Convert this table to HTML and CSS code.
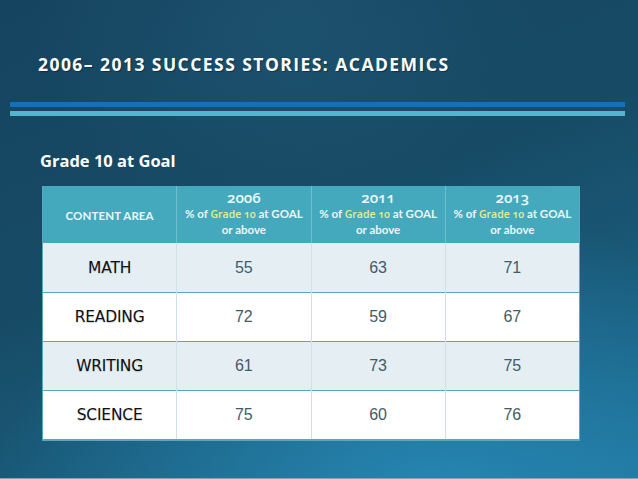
FILE: index.html
```html
<!DOCTYPE html>
<html>
<head>
<meta charset="utf-8">
<link rel="stylesheet" href="styles.css">
</head>
<body>
<div class="slide">
  <h1 class="title">2006– 2013 SUCCESS STORIES: ACADEMICS</h1>
  <div class="bars">
    <div class="bar bar-dark"></div>
    <div class="bar bar-light"></div>
  </div>
  <h2 class="subtitle">Grade 10 at Goal</h2>
  <table class="data">
    <thead>
      <tr>
        <th class="area">CONTENT AREA</th>
        <th><span class="year">2006</span><span class="desc">% of <em>Grade 10</em> at GOAL<br>or above</span></th>
        <th><span class="year">2011</span><span class="desc">% of <em>Grade 10</em> at GOAL<br>or above</span></th>
        <th><span class="year">2013</span><span class="desc">% of <em>Grade 10</em> at GOAL<br>or above</span></th>
      </tr>
    </thead>
    <tbody>
      <tr class="alt"><td class="label">MATH</td><td>55</td><td>63</td><td>71</td></tr>
      <tr><td class="label">READING</td><td>72</td><td>59</td><td>67</td></tr>
      <tr class="alt"><td class="label">WRITING</td><td>61</td><td>73</td><td>75</td></tr>
      <tr><td class="label">SCIENCE</td><td>75</td><td>60</td><td>76</td></tr>
    </tbody>
  </table>
</div>
</body>
</html>
```

FILE: styles.css
```css
html, body {
  margin: 0;
  padding: 0;
}
body {
  width: 638px;
  height: 479px;
  overflow: hidden;
}
.slide {
  width: 638px;
  height: 479px;
  box-sizing: border-box;
  padding-top: 53px;
  background:
    radial-gradient(ellipse 70% 60% at 68% 105%, rgba(40,140,185,0.85), rgba(40,140,185,0) 100%),
    radial-gradient(ellipse 40% 40% at 45% 5%, rgba(40,100,130,0.35), rgba(40,100,130,0) 100%),
    linear-gradient(160deg, #154460 0%, #174b65 45%, #1a5f80 80%, #1d7098 100%);
  border-bottom: 1px solid #5fb2cc;
  font-family: "Lato", "Open Sans", sans-serif;
}
.title {
  margin: 0 0 0 38px;
  font-family: "Open Sans", sans-serif;
  font-weight: 700;
  font-size: 17.5px;
  line-height: 22px;
  letter-spacing: 1.45px;
  color: #ffffff;
  text-shadow: 1px 1px 1px rgba(0,0,0,0.35);
}
.bars {
  margin: 27px 13px 0 10px;
  display: flex;
  flex-direction: column;
  gap: 4px;
}
.bar {
  height: 5px;
}
.bar-dark {
  background: #1370bd;
}
.bar-light {
  background: #52b6cf;
}
.subtitle {
  margin: 34px 0 0 40px;
  font-family: "Open Sans", sans-serif;
  font-weight: 700;
  font-size: 16.5px;
  line-height: 22px;
  color: #ffffff;
}
.data {
  margin: 14px 0 0 42px;
  width: 538px;
  border-collapse: collapse;
  table-layout: fixed;
  border-left: 1px solid #5aa9bb;
  border-right: 1px solid #5aa9bb;
}
.data th {
  background: #45a9bd;
  color: #eaf6f8;
  height: 55px;
  padding: 0;
  font-family: "Lato", sans-serif;
  font-weight: 400;
  vertical-align: middle;
  border-left: 1px solid #6fbecd;
}
.data th:first-child {
  border-left: none;
}
.data th.area {
  font-size: 11.5px;
  font-weight: 700;
  letter-spacing: 0.1px;
  padding-top: 2px;
}
.year {
  display: block;
  font-family: "Open Sans", sans-serif;
  font-variant-numeric: oldstyle-nums;
  font-feature-settings: "onum" 1;
  font-size: 15px;
  font-weight: 600;
  line-height: 17px;
  margin-top: -3px;
}
.desc {
  display: block;
  font-size: 11.5px;
  line-height: 15px;
  font-weight: 700;
}
.desc em {
  font-style: normal;
  color: #e3ef8e;
  font-family: "Open Sans", sans-serif;
  font-size: 10.5px;
  font-weight: 600;
  font-feature-settings: "onum" 1;
}
.data td {
  height: 48px;
  padding: 0;
  text-align: center;
  vertical-align: middle;
  font-family: "Liberation Sans", Arial, sans-serif;
  font-size: 16px;
  color: #3f5c68;
  border-top: 1px solid #5aa9bb;
  border-left: 1px solid #cfe1e7;
}
.data tbody tr:first-child td {
  border-top: none;
  height: 49px;
}
.data tbody tr:last-child td {
  border-bottom: 2px solid #5aa9bb;
}
.data td.label {
  border-left: none;
  color: #111111;
  font-family: "DejaVu Sans", sans-serif;
  font-size: 15.5px;
  letter-spacing: -0.2px;
  text-shadow: 0 1px 1px rgba(0,0,0,0.18);
}
.data tr {
  background: #ffffff;
}
.data tr.alt {
  background: #e5eff3;
}
```
